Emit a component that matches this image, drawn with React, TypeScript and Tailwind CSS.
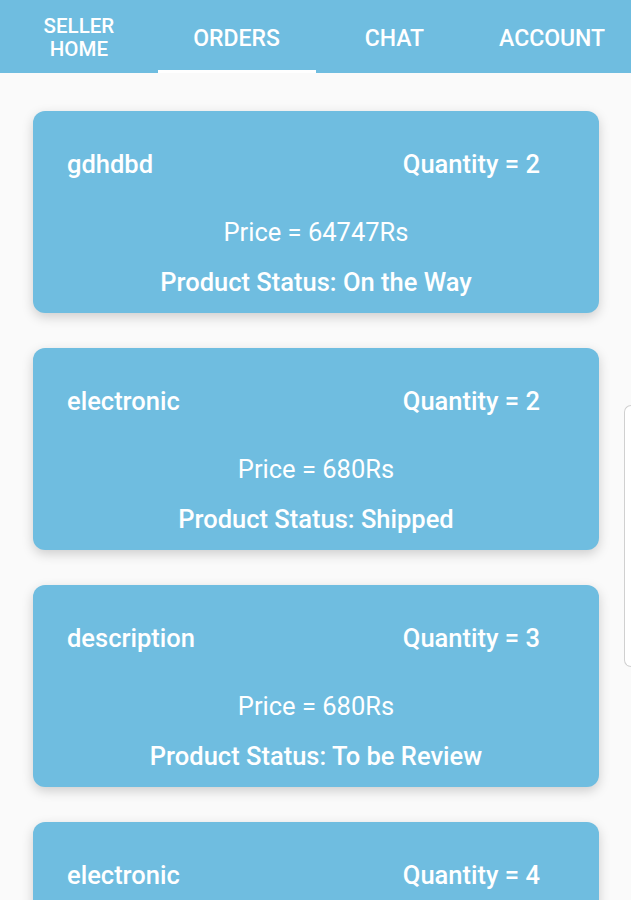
import React from 'react';

type Order = {
  name: string;
  quantity: number;
  price: string;
  status: string;
};

const orders: Order[] = [
  { name: 'gdhdbd', quantity: 2, price: '64747Rs', status: 'On the Way' },
  { name: 'electronic', quantity: 2, price: '680Rs', status: 'Shipped' },
  { name: 'description', quantity: 3, price: '680Rs', status: 'To be Review' },
  { name: 'electronic', quantity: 4, price: '680Rs', status: 'Delivered' },
];

const tabs = ['SELLER HOME', 'ORDERS', 'CHAT', 'ACCOUNT'];

const OrderCard: React.FC<{ order: Order }> = ({ order }) => (
  <div className="h-[202px] shrink-0 rounded-[12px] bg-[#6fbde0] text-white shadow-[0_4px_12px_rgba(0,0,0,0.18)] flex flex-col">
    <div className="flex justify-between pl-[34px] pr-[59px] pt-[38px] text-[25.5px] font-medium leading-[30px]">
      <span>{order.name}</span>
      <span>Quantity = {order.quantity}</span>
    </div>
    <div className="mt-[38px] text-center text-[25.5px] leading-[30px]">Price = {order.price}</div>
    <div className="mt-[20px] text-center text-[25.5px] font-medium leading-[30px]">
      Product Status: {order.status}
    </div>
  </div>
);

const App: React.FC = () => {
  return (
    <div className="relative h-[900px] w-[631px] overflow-hidden bg-[#fafafa] font-['Roboto',sans-serif]">
      <div className="h-[73px] bg-[#6fbde0] grid grid-cols-4 text-white">
        {tabs.map((tab, i) => (
          <div key={tab} className="relative flex items-center justify-center">
            {i === 0 ? (
              <span className="text-center text-[20.5px] font-medium leading-[23px] w-[80px] mt-[2px]">
                SELLER HOME
              </span>
            ) : (
              <span className="text-[23px] font-medium pt-[6px]">{tab}</span>
            )}
            {i === 1 && <div className="absolute bottom-0 left-0 right-0 h-[3px] bg-white" />}
          </div>
        ))}
      </div>

      <div className="flex flex-col gap-[35px] px-[33px] pt-[38px] pr-[32px]">
        {orders.map((o, i) => (
          <OrderCard key={i} order={o} />
        ))}
      </div>

      <div className="absolute right-0 top-[405px] h-[262px] w-[7px] rounded-l-[8px] border border-r-0 border-[#d0d0d0] bg-white" />
    </div>
  );
};

export default App;
